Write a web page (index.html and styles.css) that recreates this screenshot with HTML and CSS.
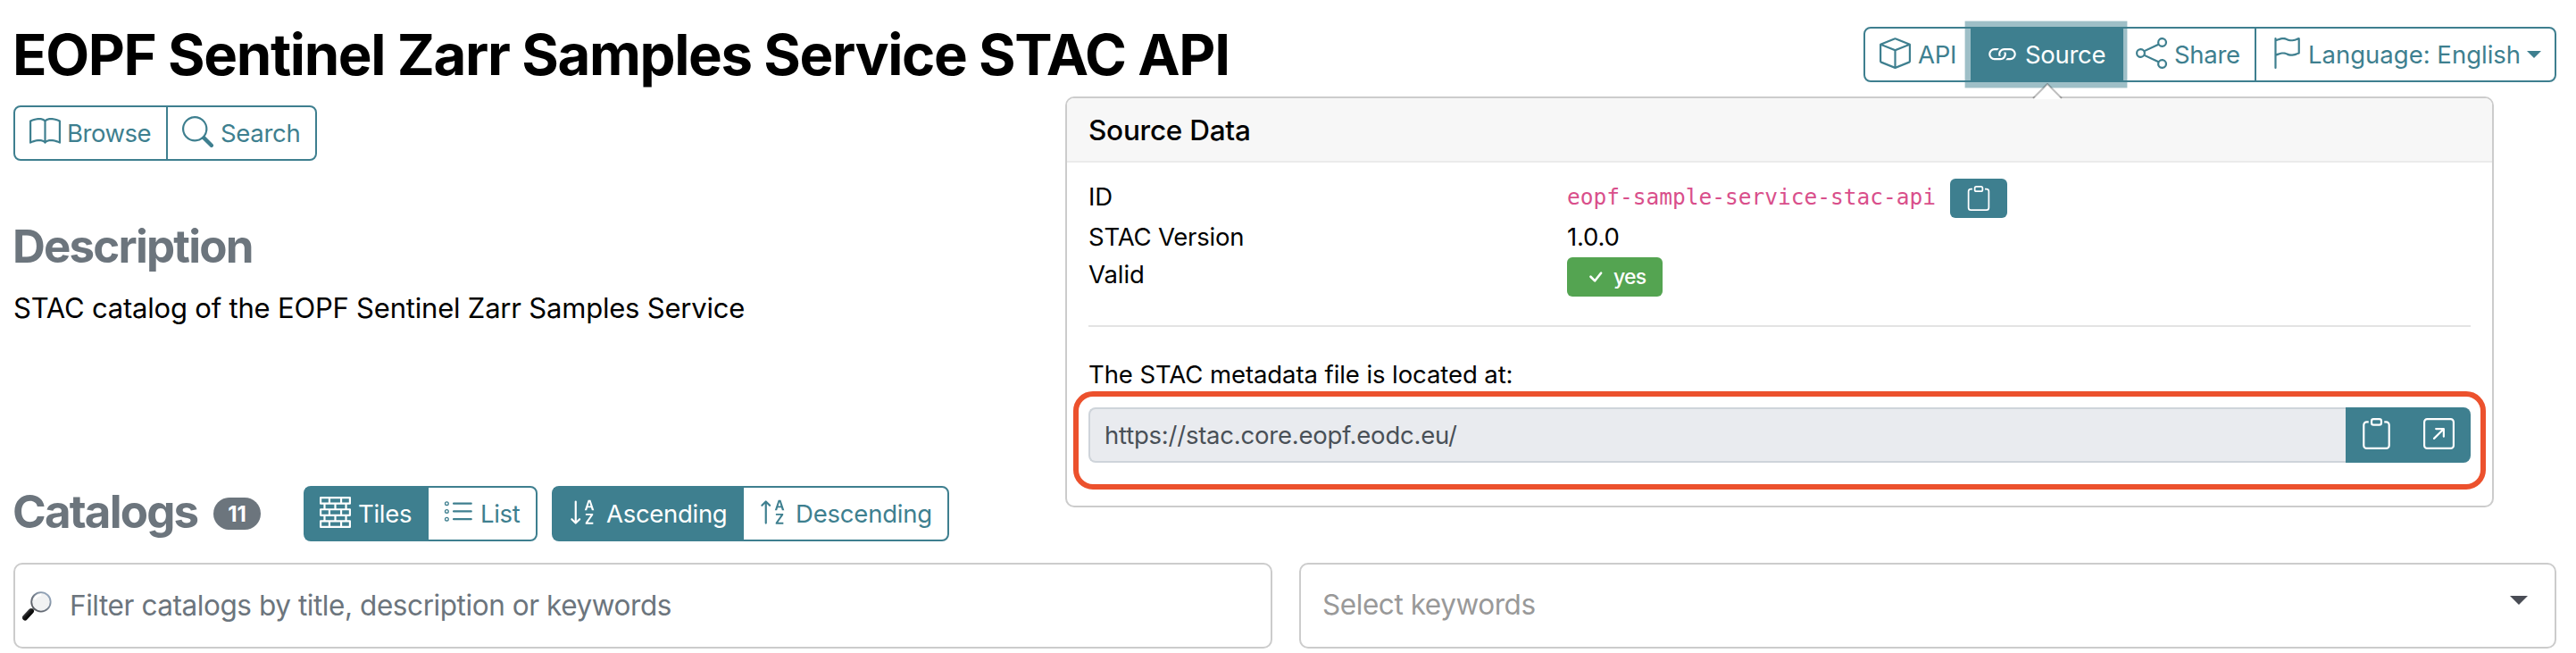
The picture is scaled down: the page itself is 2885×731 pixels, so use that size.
FILE: index.html
```
<!DOCTYPE html>
<html lang="en">
<head>
<meta charset="utf-8">
<title>EOPF Sentinel Zarr Samples Service STAC API</title>
<link rel="stylesheet" href="styles.css">
</head>
<body>
<svg class="sprite" aria-hidden="true">
  <symbol id="i-book" viewBox="0 0 16 16"><path d="M1 2.828c.885-.37 2.154-.769 3.388-.893 1.33-.134 2.458.063 3.112.752v9.746c-.935-.53-2.12-.603-3.213-.493-1.18.12-2.37.461-3.287.811zm7.5-.141c.654-.689 1.782-.886 3.112-.752 1.234.124 2.503.523 3.388.893v9.923c-.918-.35-2.107-.692-3.287-.81-1.094-.111-2.278-.039-3.213.492zM8 1.783C7.015.936 5.587.81 4.287.94c-1.514.153-3.042.672-3.994 1.105A.5.5 0 0 0 0 2.5v11a.5.5 0 0 0 .707.455c.882-.4 2.303-.881 3.68-1.02 1.409-.142 2.59.087 3.223.877a.5.5 0 0 0 .78 0c.633-.79 1.814-1.019 3.222-.877 1.378.139 2.8.62 3.681 1.02A.5.5 0 0 0 16 13.5v-11a.5.5 0 0 0-.293-.455c-.952-.433-2.48-.952-3.994-1.105C10.413.809 8.985.936 8 1.783"/></symbol>
  <symbol id="i-search" viewBox="0 0 16 16"><path d="M11.742 10.344a6.5 6.5 0 1 0-1.397 1.398h-.001q.044.06.098.115l3.85 3.85a1 1 0 0 0 1.415-1.414l-3.85-3.85a1 1 0 0 0-.115-.1zM12 6.5a5.5 5.5 0 1 1-11 0 5.5 5.5 0 0 1 11 0"/></symbol>
  <symbol id="i-box" viewBox="0 0 16 16"><path d="M8.186 1.113a.5.5 0 0 0-.372 0L1.846 3.5 8 5.961 14.154 3.5zM15 4.239l-6.5 2.6v7.922l6.5-2.6V4.24zM7.5 14.762V6.838L1 4.239v7.923zM7.443.184a1.5 1.5 0 0 1 1.114 0l7.129 2.852A.5.5 0 0 1 16 3.5v8.662a1 1 0 0 1-.629.928l-7.185 2.874a.5.5 0 0 1-.372 0L.63 13.09a1 1 0 0 1-.63-.928V3.5a.5.5 0 0 1 .314-.464z"/></symbol>
  <symbol id="i-link" viewBox="0 0 16 16"><path d="M6.354 5.5H4a3 3 0 0 0 0 6h3a3 3 0 0 0 2.83-4H9q-.13 0-.25.031A2 2 0 0 1 7 10.5H4a2 2 0 1 1 0-4h1.535c.218-.376.495-.714.82-1z"/><path d="M9 5.5a3 3 0 0 0-2.83 4h1.098A2 2 0 0 1 9 6.5h3a2 2 0 1 1 0 4h-1.535a4 4 0 0 1-.82 1H12a3 3 0 1 0 0-6z"/></symbol>
  <symbol id="i-share" viewBox="0 0 16 16"><path d="M13.5 1a1.5 1.5 0 1 0 0 3 1.5 1.5 0 0 0 0-3M11 2.5a2.5 2.5 0 1 1 .603 1.628l-6.718 3.12a2.5 2.5 0 0 1 0 1.504l6.718 3.12a2.5 2.5 0 1 1-.488.876l-6.718-3.12a2.5 2.5 0 1 1 0-3.256l6.718-3.12A2.5 2.5 0 0 1 11 2.5m-8.5 4a1.5 1.5 0 1 0 0 3 1.5 1.5 0 0 0 0-3m11 5.5a1.5 1.5 0 1 0 0 3 1.5 1.5 0 0 0 0-3"/></symbol>
  <symbol id="i-flag" viewBox="0 0 16 16"><path d="M14.778.085A.5.5 0 0 1 15 .5V8a.5.5 0 0 1-.314.464L14.5 8l.186.464-.003.001-.006.003-.023.009a12 12 0 0 1-.397.15c-.264.095-.631.223-1.047.35-.816.252-1.879.523-2.71.523-.847 0-1.548-.28-2.158-.525l-.028-.01C7.68 8.71 7.14 8.5 6.5 8.5c-.7 0-1.638.23-2.437.477A20 20 0 0 0 3 9.342V15.5a.5.5 0 0 1-1 0V.5a.5.5 0 0 1 1 0v.282c.226-.079.496-.17.79-.26C4.606.272 5.67 0 6.5 0c.84 0 1.524.277 2.121.519l.043.018C9.286.788 9.828 1 10.5 1c.7 0 1.638-.23 2.437-.477a20 20 0 0 0 1.349-.476l.019-.007.004-.002h.001M14 1.221c-.22.078-.48.167-.766.255-.81.252-1.872.523-2.734.523-.886 0-1.592-.286-2.203-.534l-.008-.003C7.662 1.21 7.139 1 6.5 1c-.669 0-1.606.229-2.415.478A21 21 0 0 0 3 1.845v6.433c.22-.078.48-.167.766-.255C4.576 7.77 5.638 7.5 6.5 7.5c.847 0 1.548.28 2.158.525l.028.01C9.32 8.29 9.86 8.5 10.5 8.5c.668 0 1.606-.229 2.415-.478A21 21 0 0 0 14 7.655V1.222z"/></symbol>
  <symbol id="i-clipboard" viewBox="0 0 16 16"><path d="M4 1.5H3a2 2 0 0 0-2 2V14a2 2 0 0 0 2 2h10a2 2 0 0 0 2-2V3.5a2 2 0 0 0-2-2h-1v1h1a1 1 0 0 1 1 1V14a1 1 0 0 1-1 1H3a1 1 0 0 1-1-1V3.5a1 1 0 0 1 1-1h1z"/><path d="M9.5 1a.5.5 0 0 1 .5.5v1a.5.5 0 0 1-.5.5h-3a.5.5 0 0 1-.5-.5v-1a.5.5 0 0 1 .5-.5zm-3-1A1.5 1.5 0 0 0 5 1.5v1A1.5 1.5 0 0 0 6.5 4h3A1.5 1.5 0 0 0 11 2.5v-1A1.5 1.5 0 0 0 9.5 0z"/></symbol>
  <symbol id="i-open" viewBox="0 0 16 16"><path d="M15 2a1 1 0 0 0-1-1H2a1 1 0 0 0-1 1v12a1 1 0 0 0 1 1h12a1 1 0 0 0 1-1zM0 2a2 2 0 0 1 2-2h12a2 2 0 0 1 2 2v12a2 2 0 0 1-2 2H2a2 2 0 0 1-2-2zm5.854 8.803a.5.5 0 1 1-.708-.707L9.243 6H6.475a.5.5 0 1 1 0-1h3.975a.5.5 0 0 1 .5.5v3.975a.5.5 0 1 1-1 0V6.707z"/></symbol>
  <symbol id="i-check" viewBox="0 0 16 16"><path d="M10.97 4.97a.75.75 0 0 1 1.07 1.05l-3.99 4.99a.75.75 0 0 1-1.08.02L4.324 8.384a.75.75 0 1 1 1.06-1.06l2.094 2.093 3.473-4.425z"/></symbol>
  <symbol id="i-bricks" viewBox="0 0 16 16"><path d="M0 .5A.5.5 0 0 1 .5 0h15a.5.5 0 0 1 .5.5v3a.5.5 0 0 1-.5.5H14v2h1.5a.5.5 0 0 1 .5.5v3a.5.5 0 0 1-.5.5H14v2h1.5a.5.5 0 0 1 .5.5v3a.5.5 0 0 1-.5.5H.5a.5.5 0 0 1-.5-.5v-3a.5.5 0 0 1 .5-.5H2v-2H.5a.5.5 0 0 1-.5-.5v-3A.5.5 0 0 1 .5 6H2V4H.5a.5.5 0 0 1-.5-.5zM3 4v2h4.500V4zm5.500 0v2H13V4zM3 10v2h4.500v-2zm5.500 0v2H13v-2zM1 1v2h3.500V1zm4.500 0v2h5V1zm6 0v2H15V1zM1 7v2h3.500V7zm4.500 0v2h5V7zm6 0v2H15V7zM1 13v2h3.500v-2zm4.500 0v2h5v-2zm6 0v2H15v-2z"/></symbol>
  <symbol id="i-list" viewBox="0 0 16 16"><path fill="none" stroke="currentColor" stroke-linecap="round" d="M5.500 3.500h9M5.500 7.500h9M5.500 11.500h9"/><g fill="none" stroke="currentColor" stroke-width=".6"><circle cx="2" cy="3.500" r=".85"/><circle cx="2" cy="7.500" r=".85"/><circle cx="2" cy="11.500" r=".85"/></g></symbol>
  <symbol id="i-az" viewBox="0 0 16 16"><path fill-rule="evenodd" d="M10.082 5.629 9.664 7H8.598l1.789-5.332h1.234L13.402 7h-1.120l-.419-1.371zm1.570-.785L11 2.687h-.047l-.652 2.157z"/><path d="M12.960 14H9.028v-.691l2.579-3.720v-.054H9.098v-.867h3.785v.691l-2.567 3.720v.054h2.645z"/></symbol>
  <symbol id="i-sort-down" viewBox="0 0 16 16"><use href="#i-az"/><path d="M4.500 2.500a.5.5 0 0 0-1 0v9.793l-1.146-1.147a.5.5 0 0 0-.708.708l2 1.999.007.007a.497.497 0 0 0 .7-.006l2-2a.5.5 0 0 0-.707-.708L4.500 12.293z"/></symbol>
  <symbol id="i-sort-up" viewBox="0 0 16 16"><use href="#i-az"/><path d="M4.500 13.500a.5.5 0 0 1-1 0V3.707L2.354 4.854a.5.5 0 1 1-.708-.708l2-1.999.007-.007a.5.5 0 0 1 .7.006l2 2a.5.5 0 1 1-.707.708L4.500 3.707z"/></symbol>
</svg>

<header class="top">
  <h1 class="title"><span>EOPF Sentinel Zarr Samples Service STAC API</span></h1>
  <div class="group actions">
    <a class="btn btn-api"><svg class="icon"><use href="#i-box"/></svg><span>API</span></a>
    <a class="btn btn-source active focus"><svg class="icon"><use href="#i-link"/></svg><span>Source</span></a>
    <a class="btn btn-share"><svg class="icon"><use href="#i-share"/></svg><span>Share</span></a>
    <a class="btn btn-lang"><svg class="icon"><use href="#i-flag"/></svg><span>Language: English</span><i class="caret"></i></a>
  </div>
</header>

<nav class="group nav">
  <a class="btn btn-browse"><svg class="icon"><use href="#i-book"/></svg><span>Browse</span></a>
  <a class="btn btn-search"><svg class="icon"><use href="#i-search"/></svg><span>Search</span></a>
</nav>

<section class="description">
  <h2 class="heading"><span class="t-desc">Description</span></h2>
  <p class="lead"><span>STAC catalog of the EOPF Sentinel Zarr Samples Service</span></p>
</section>

<section class="catalogs">
  <div class="toolbar">
    <h2 class="heading"><span class="t-cat">Catalogs</span></h2>
    <span class="count">11</span>
    <div class="group view">
      <a class="btn btn-tiles active"><svg class="icon"><use href="#i-bricks"/></svg><span>Tiles</span></a>
      <a class="btn btn-list"><svg class="icon"><use href="#i-list"/></svg><span>List</span></a>
    </div>
    <div class="group sort">
      <a class="btn btn-asc active"><svg class="icon"><use href="#i-sort-down"/></svg><span>Ascending</span></a>
      <a class="btn btn-dsc"><svg class="icon"><use href="#i-sort-up"/></svg><span>Descending</span></a>
    </div>
  </div>
  <div class="filters">
    <div class="field">
      <svg class="lens" viewBox="0 0 32 32">
        <defs>
          <linearGradient id="rim" x1="0" y1="1" x2="1" y2="0"><stop offset="0" stop-color="#4c4c50"/><stop offset="1" stop-color="#9fb4cc"/></linearGradient>
          <linearGradient id="grip" x1="0" y1="0" x2="1" y2="1"><stop offset="0" stop-color="#55555a"/><stop offset=".5" stop-color="#111"/><stop offset="1" stop-color="#000"/></linearGradient>
        </defs>
        <path d="M9 22.500 13 18.500" stroke="#8b8b8e" stroke-width="3"/>
        <path d="M3 28.500 9.500 21.500" stroke="url(#grip)" stroke-width="6" stroke-linecap="round"/>
        <circle cx="20.300" cy="11.500" r="10.400" fill="#f1f2f3" stroke="url(#rim)" stroke-width="1.800"/>
        <path d="M13.500 9a7.500 7.500 0 0 1 7-5" fill="none" stroke="#fff" stroke-width="2"/>
      </svg>
      <span class="t-filter">Filter catalogs by title, description or keywords</span>
    </div>
    <div class="field select"><span class="t-select">Select keywords</span><i class="arrow"></i></div>
  </div>
</section>

<aside class="popover">
  <svg class="tip" viewBox="0 0 34 18"><path class="tip-fill" d="M1 18 17 1 33 18z"/><path class="tip-line" d="M1 17 17 1 33 17"/></svg>
  <h3 class="popover-title"><span>Source Data</span></h3>
  <div class="popover-body">
    <dl class="meta">
      <dt class="row-id"><span class="t-id">ID</span></dt>
      <dd class="row-id"><code>eopf-sample-service-stac-api</code><button class="copy"><svg class="icon-sm"><use href="#i-clipboard"/></svg></button></dd>
      <dt class="row-ver"><span class="t-ver">STAC Version</span></dt>
      <dd class="row-ver"><span class="t-num">1.0.0</span></dd>
      <dt class="row-valid"><span class="t-valid">Valid</span></dt>
      <dd class="row-badge"><span class="badge"><svg class="icon-sm"><use href="#i-check"/></svg><span>yes</span></span></dd>
    </dl>
    <hr>
    <p class="located"><span>The STAC metadata file is located at:</span></p>
    <div class="highlight">
      <div class="url"><div class="url-box"><span>https://stac.core.eopf.eodc.eu/</span></div><button class="url-btn"><svg class="icon"><use href="#i-clipboard"/></svg></button><button class="url-btn"><svg class="icon"><use href="#i-open"/></svg></button></div>
    </div>
  </div>
</aside>
</body>
</html>
```
FILE: styles.css
```
* { box-sizing: border-box; }
html, body { margin: 0; }
body {
  position: relative;
  width: 2885px;
  height: 731px;
  padding: 30px 22px 0 15px;
  overflow: hidden;
  background: #fff;
  color: #000;
  font: 400 27.500px/42px Inter, "Liberation Sans", sans-serif;
  letter-spacing: -.08px;
}
h1, h2, h3, p, dl, dd { margin: 0; }
span { white-space: nowrap; }
.sprite { position: absolute; width: 0; height: 0; }
.icon { width: 35px; height: 35px; fill: currentColor; flex: none; }
.icon-sm { width: 28px; height: 28px; fill: currentColor; flex: none; }

.top { display: flex; justify-content: space-between; height: 62px; }
.title { font-size: 63.500px; line-height: 62px; font-weight: 700; letter-spacing: -1.370px; }
.title span { margin-left: -1px; }

.group { display: flex; width: max-content; height: 62px; border: 2px solid #3e7f8f; border-radius: 8px; color: #3e7f8f; }
.btn { display: flex; align-items: center; padding-left: 16px; gap: 8px; height: 58px; letter-spacing: -.300px; }
.btn + .btn { border-left: 2px solid #3e7f8f; }
.btn .icon { margin-top: -4px; }
.btn.active { background: #3e7f8f; color: #fff; }
.btn-api { width: 118px; }
.btn-source { width: 169px; }
.btn.btn-share { width: 149px; padding-left: 14px; }
.btn-lang { width: 336px; gap: 7px; letter-spacing: 0; }
.btn.focus { position: relative; box-shadow: 0 0 0 6.400px rgba(62, 127, 143, .5); height: 62px; margin: -2px 0; }
.caret { border: 8px solid transparent; border-top: 8px solid currentColor; border-bottom: 0; }
.nav { margin-top: 26px; }
.btn-browse { width: 169px; gap: 7px; letter-spacing: -.500px; }
.btn-search { width: 167px; }

.heading { font-size: 51px; line-height: 60px; font-weight: 700; color: #6c757d; letter-spacing: -1.800px; }
.heading span { margin-left: -1px; }
.description { margin-top: 66px; }
.lead { margin-top: 15px; font-size: 31px; line-height: 48px; letter-spacing: -.200px; }

.catalogs { margin-top: 175px; }
.toolbar { display: flex; align-items: center; height: 62px; }
.toolbar .heading { padding-bottom: 4px; }
.t-cat { display: block; width: 225px; }
.count { width: 53px; height: 36px; margin-right: 48px; border-radius: 18px; background: #6c757d; color: #fff; font-size: 24px; line-height: 37px; font-weight: 700; text-align: center; }
.view { margin-right: 16px; }
.btn-tiles { width: 136px; }
.btn-list { width: 122px; gap: 7px; }
.btn-asc { width: 211px; }
.btn-dsc { width: 230px; gap: 7px; letter-spacing: -.200px; }
.filters { display: grid; grid-template-columns: 1410px 1408px; gap: 30px; margin-top: 24px; }
.field { display: flex; align-items: center; height: 96px; padding-left: 8px; border: 2px solid #ccc; border-radius: 10px; font-size: 31.500px; letter-spacing: -.430px; color: #6c757d; }
.lens { width: 33px; height: 33px; margin-right: 20px; }
.select { justify-content: space-between; padding: 0 30px 2px 24px; color: #999; }
.arrow { border: 10px solid transparent; border-top: 10px solid #494c55; border-bottom: 0; margin-bottom: 10px; }

.popover { position: absolute; left: 1193px; top: 108px; width: 1600px; height: 460px; border: 2px solid #ccc; border-radius: 10px; background: #fff; }
.tip { position: absolute; left: 1081px; top: -17px; width: 34px; height: 18px; }
.tip-fill { fill: #fff; }
.tip-line { fill: none; stroke: rgba(0, 0, 0, .25); stroke-width: 2; }
.popover-title { height: 72px; padding-left: 24px; border-bottom: 2px solid #ebebeb; border-radius: 8px 8px 0 0; background: #f7f7f7; font-size: 31.500px; line-height: 72px; font-weight: 500; letter-spacing: -.250px; }
.popover-body { padding: 16px 24px 0; }
.meta { display: grid; grid-template-columns: 536px 1fr; grid-template-rows: 47px 42px 46px; }
.row-id { display: flex; height: 47px; line-height: 45px; }
.row-ver, .row-valid { line-height: 40px; }
.row-ver { letter-spacing: -.200px; }
.row-badge { padding-top: 1px; }
code { margin-right: 16px; color: #d94f8b; font: 24.500px/46px "DejaVu Sans Mono", monospace; letter-spacing: 0; }
button { border: 0; padding: 0; color: #fff; background: #3e7f8f; display: flex; align-items: center; justify-content: center; }
.copy { width: 64px; height: 44px; margin-top: 2px; border-radius: 6px; }
.badge { display: flex; align-items: center; width: 107px; height: 44px; padding-left: 18px; gap: 6px; border-radius: 6px; background: #54a451; color: #fff; font-size: 23px; font-weight: 500; letter-spacing: -.800px; }
hr { height: 2px; margin: 31px 0; border: 0; background: #e3e3e3; }
.located { height: 42px; line-height: 45px; }
.highlight { width: 1582px; height: 110px; margin: -1px 0 0 -17px; padding: 12px; border: 6px solid #ec512d; border-radius: 22px; }
.url { display: flex; width: 1548px; height: 62px; margin-left: -1px; }
.url-box { width: 1408px; border: 2px solid #ced4da; border-right: 0; border-radius: 8px 0 0 8px; background: #e9ebef; color: #495057; padding-left: 16px; line-height: 59px; letter-spacing: -.220px; }
.url-btn { width: 70px; padding: 0 2px 3px 0; }
.url-btn:last-child { border-radius: 0 8px 8px 0; }
```
